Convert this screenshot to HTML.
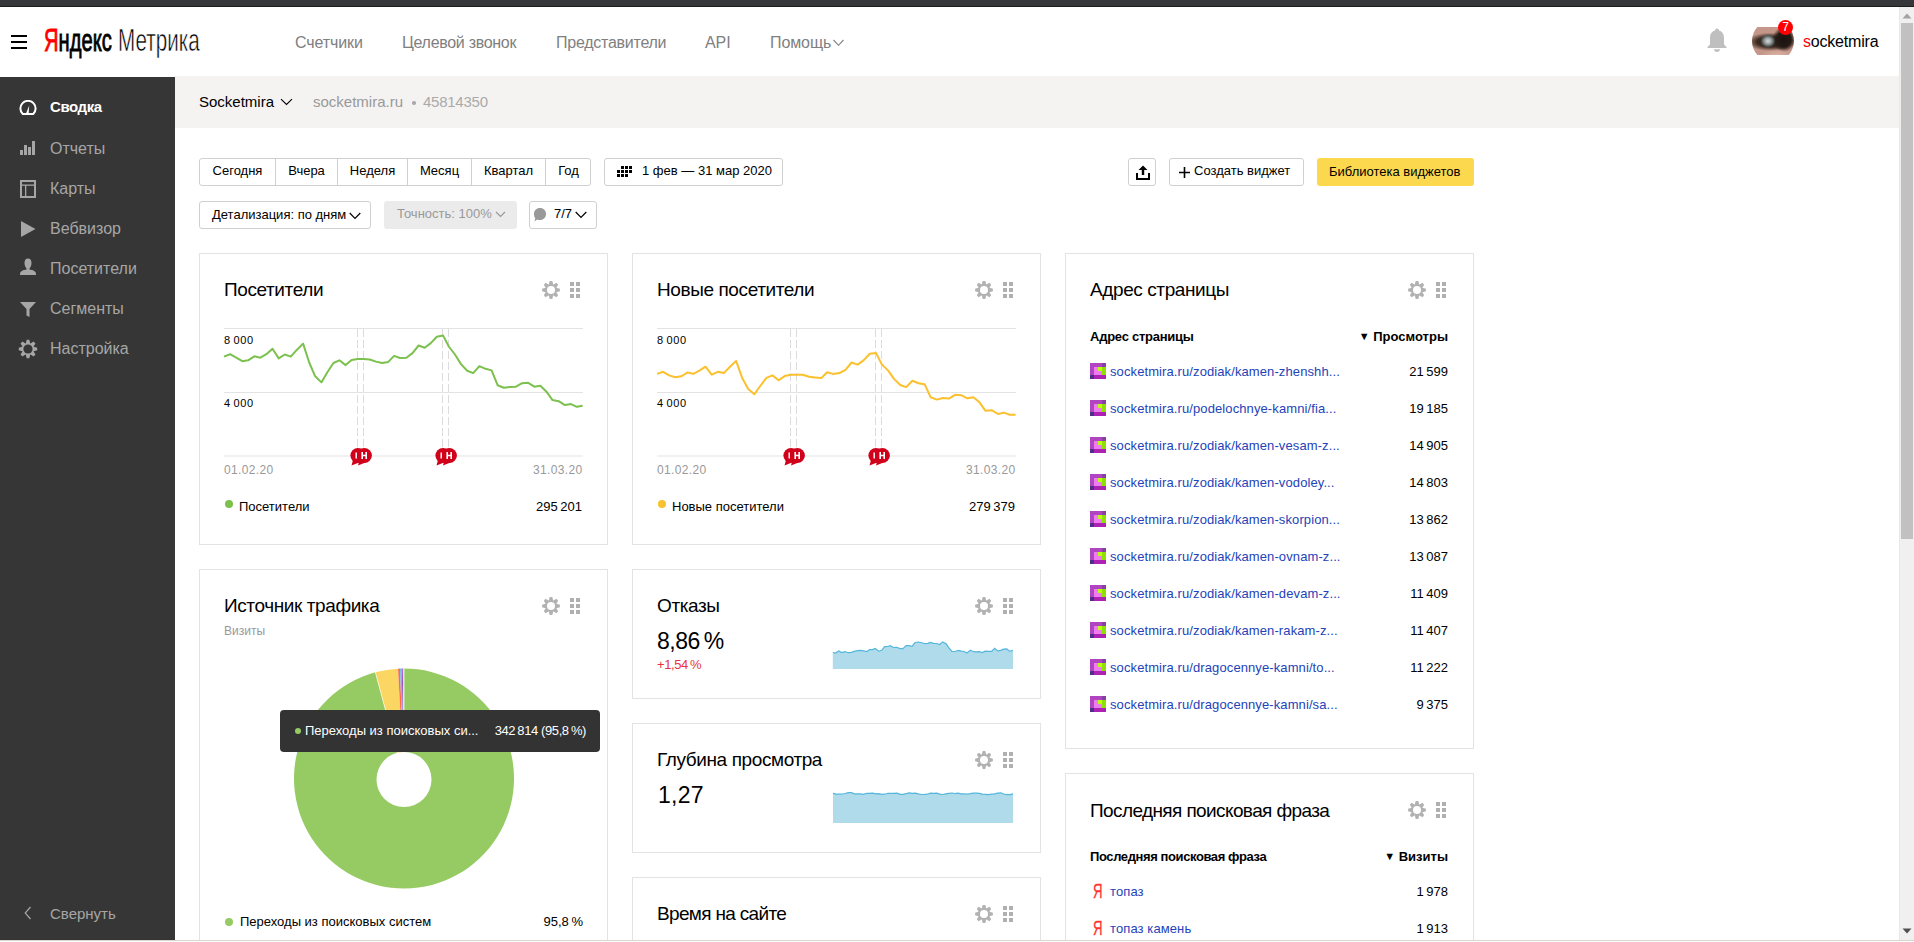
<!DOCTYPE html>
<html><head><meta charset="utf-8">
<style>
*{box-sizing:border-box;margin:0;padding:0}
html,body{width:1914px;height:942px;overflow:hidden;background:#fff;font-family:"Liberation Sans",sans-serif;color:#000}
.a{position:absolute;white-space:nowrap}
#topbar{position:absolute;left:0;top:0;width:1914px;height:6px;background:#36373b}
#topline{position:absolute;left:0;top:6px;width:1914px;height:1px;background:#1c1c1c}
#side{position:absolute;left:0;top:77px;width:175px;height:863px;background:#363636}
#sitebar{position:absolute;left:175px;top:76px;width:1724px;height:52px;background:#f4f3f1}
.nav{font-size:16px;color:#808080;top:34px;letter-spacing:-0.1px}
.mi{font-size:16px;color:#a6a6a6;left:50px}
.card{position:absolute;border:1px solid #e3e3e3;background:#fff}
.ttl{font-size:18px;color:#000}
.btn{position:absolute;border:1px solid #d0d0d0;border-radius:3px;background:#fff;font-size:13px}
.seg{position:absolute;top:0;height:100%;font-size:13px;line-height:23px;text-align:center;border-left:1px solid #d0d0d0}
#scroll{position:absolute;left:1899px;top:7px;width:15px;height:933px;background:#f0f0f0}
#bottom{position:absolute;left:0;top:940px;width:1914px;height:2px;background:#fff;border-top:1px solid #d9d6ce}
</style></head><body>
<div id="topbar"></div><div id="topline"></div>
<!-- header -->
<div class="a" style="left:11px;top:35px;width:16px;height:2px;background:#000"></div>
<div class="a" style="left:11px;top:41px;width:16px;height:2px;background:#000"></div>
<div class="a" style="left:11px;top:47px;width:16px;height:2px;background:#000"></div>
<div class="a" id="logo1" style="left:44px;top:23px;font-size:32px;line-height:34px;transform:scaleX(0.63);transform-origin:0 0;-webkit-text-stroke:0.9px #000"><span style="color:#f00;-webkit-text-stroke:0.9px #f00">Я</span>ндекс</div>
<div class="a" id="logo2" style="left:118px;top:23px;font-size:32px;line-height:34px;transform:scaleX(0.645);transform-origin:0 0;color:#000;-webkit-text-stroke:0.6px #fff">Метрика</div>
<div class="a nav" style="left:295px">Счетчики</div>
<div class="a nav" style="left:402px;letter-spacing:-0.3px">Целевой звонок</div>
<div class="a nav" style="left:556px;letter-spacing:-0.25px">Представители</div>
<div class="a nav" style="left:705px">API</div>
<div class="a nav" style="left:770px">Помощь</div>
<svg class="a" style="left:833px;top:39px" width="12" height="8" viewBox="0 0 12 8"><path d="M0.5,1 L5.5,6.3 L10.5,1" fill="none" stroke="#808080" stroke-width="1.1"/></svg>
<!-- bell -->
<svg class="a" style="left:1706px;top:27px" width="22" height="26" viewBox="0 0 22 26"><path d="M11,1.5 C12.5,1.5 13,2.5 13,3.5 C16.5,4.5 18,7.5 18,11 L18,17.5 L20.5,20 L20.5,21 L1.5,21 L1.5,20 L4,17.5 L4,11 C4,7.5 5.5,4.5 9,3.5 C9,2.5 9.5,1.5 11,1.5 Z" fill="#bfbfbf"/><path d="M8,22.2 L14,22.2 C13.8,24 12.7,25 11,25 C9.3,25 8.2,24 8,22.2Z" fill="#bfbfbf"/></svg>
<!-- avatar -->
<div class="a" style="left:1752px;top:27px;width:42px;height:28px;overflow:hidden">
<div style="position:absolute;left:0;top:-7px;width:42px;height:42px;border-radius:50%;overflow:hidden;background:#c4978a">
<div style="position:absolute;left:0;top:0;width:42px;height:42px;background:radial-gradient(ellipse 60% 22% at 45% 52%,#2e2018 0,#3a2a20 55%,rgba(60,40,30,0) 100%)"></div>
<div style="position:absolute;left:0;top:0;width:42px;height:42px;background:radial-gradient(ellipse 28% 30% at 76% 46%,#1a1210 0,#241a15 60%,rgba(36,26,21,0) 100%)"></div>
<div style="position:absolute;left:0;top:0;width:42px;height:42px;background:radial-gradient(ellipse 18% 16% at 38% 50%,#d8d8d8 0,#9aa0a0 45%,#556060 75%,rgba(80,90,90,0) 100%)"></div>
<div style="position:absolute;left:0;top:0;width:42px;height:42px;background:radial-gradient(ellipse 40% 20% at 60% 88%,#e4b8a8 0,rgba(228,184,168,0) 100%)"></div>
</div></div>
<div class="a" style="left:1778px;top:20px;width:15px;height:15px;border-radius:50%;background:#f00;color:#fff;font-size:12px;line-height:15px;text-align:center">7</div>
<div class="a" style="left:1803px;top:33px;font-size:16px;color:#000;letter-spacing:-0.2px"><span style="color:#f00">s</span>ocketmira</div>

<div id="side"></div>
<!-- sidebar icons -->
<svg class="a" style="left:18px;top:100px" width="20" height="16" viewBox="0 0 20 16"><path d="M4.8,14 A7.6,7.6 0 1 1 15.2,14 Z" fill="none" stroke="#fff" stroke-width="2"/><path d="M7.8,14 L11.2,5.5 L10.6,14Z" fill="#fff"/></svg>
<svg class="a" style="left:20px;top:140px" width="16" height="16" viewBox="0 0 16 16"><rect x="0" y="10" width="3" height="5" fill="#a6a6a6"/><rect x="4" y="5" width="3" height="10" fill="#a6a6a6"/><rect x="8" y="7" width="3" height="8" fill="#a6a6a6"/><rect x="12" y="1" width="3" height="14" fill="#a6a6a6"/></svg>
<svg class="a" style="left:20px;top:180px" width="16" height="18" viewBox="0 0 16 18"><rect x="1" y="1" width="14" height="16" fill="none" stroke="#a6a6a6" stroke-width="2"/><rect x="2" y="4.5" width="12" height="1.3" fill="#a6a6a6"/><rect x="5" y="5" width="1.3" height="12" fill="#a6a6a6"/></svg>
<svg class="a" style="left:21px;top:221px" width="15" height="16" viewBox="0 0 15 16"><path d="M0,0 L14.5,8 L0,16Z" fill="#a6a6a6"/></svg>
<svg class="a" style="left:20px;top:258px" width="16" height="18" viewBox="0 0 16 18"><path d="M8,0.5 C10.5,0.5 11.5,2.5 11.5,5 C11.5,7.5 10.5,9.5 9.5,10.5 L9.5,11.5 C12.5,12 16,13 16,16 L16,17 L0,17 L0,16 C0,13 3.5,12 6.5,11.5 L6.5,10.5 C5.5,9.5 4.5,7.5 4.5,5 C4.5,2.5 5.5,0.5 8,0.5Z" fill="#a6a6a6"/></svg>
<svg class="a" style="left:20px;top:302px" width="16" height="16" viewBox="0 0 16 16"><path d="M0,0 L16,0 L9.5,7 L9.5,15 L6.5,13.5 L6.5,7Z" fill="#a6a6a6"/></svg>
<svg class="a" style="left:18px;top:339px" width="20" height="20" viewBox="-10 -10 20 20"><g fill="#a6a6a6"><circle r="5.8"/><polygon points="-2.40,-4.80 -1.30,-9.20 1.30,-9.20 2.40,-4.80"/><polygon points="1.70,-5.09 5.59,-7.42 7.42,-5.59 5.09,-1.70"/><polygon points="4.80,-2.40 9.20,-1.30 9.20,1.30 4.80,2.40"/><polygon points="5.09,1.70 7.42,5.59 5.59,7.42 1.70,5.09"/><polygon points="2.40,4.80 1.30,9.20 -1.30,9.20 -2.40,4.80"/><polygon points="-1.70,5.09 -5.59,7.42 -7.42,5.59 -5.09,1.70"/><polygon points="-4.80,2.40 -9.20,1.30 -9.20,-1.30 -4.80,-2.40"/><polygon points="-5.09,-1.70 -7.42,-5.59 -5.59,-7.42 -1.70,-5.09"/></g><circle r="4.6" fill="#363636"/></svg>
<svg class="a" style="left:24px;top:906px" width="8" height="14" viewBox="0 0 8 14"><path d="M6.5,1 L1.2,7 L6.5,13" fill="none" stroke="#a6a6a6" stroke-width="1.2"/></svg>
<div class="a mi" style="top:98px;color:#fff;font-weight:bold;font-size:15px;letter-spacing:-0.4px">Сводка</div>
<div class="a mi" style="top:140px">Отчеты</div>
<div class="a mi" style="top:180px">Карты</div>
<div class="a mi" style="top:220px">Вебвизор</div>
<div class="a mi" style="top:260px">Посетители</div>
<div class="a mi" style="top:300px">Сегменты</div>
<div class="a mi" style="top:340px">Настройка</div>
<div class="a mi" style="top:905px;font-size:15px">Свернуть</div>

<div id="sitebar"></div>
<div class="a" style="left:199px;top:93px;font-size:15px;color:#000">Socketmira</div>
<svg class="a" style="left:279.5px;top:98px" width="13" height="8" viewBox="0 0 13 8"><path d="M1,1.2 L6.5,6.5 L12,1.2" fill="none" stroke="#000" stroke-width="1.1"/></svg>
<div class="a" style="left:313px;top:93px;font-size:15px;color:#999">socketmira.ru</div><div class="a" style="left:412px;top:101px;width:3.5px;height:3.5px;border-radius:50%;background:#aaa"></div><div class="a" style="left:423px;top:93px;font-size:15px;color:#aaa;letter-spacing:-0.25px">45814350</div>

<!-- toolbar -->
<div class="btn" style="left:199px;top:158px;width:392px;height:28px">
<div class="seg" style="left:0;width:75px;border-left:0">Сегодня</div>
<div class="seg" style="left:75px;width:62px">Вчера</div>
<div class="seg" style="left:137px;width:70px">Неделя</div>
<div class="seg" style="left:207px;width:64px">Месяц</div>
<div class="seg" style="left:271px;width:74px">Квартал</div>
<div class="seg" style="left:345px;width:46px">Год</div>
</div>
<div class="btn" style="left:604px;top:158px;width:179px;height:28px">
<svg class="a" style="left:12px;top:7px" width="16" height="12" viewBox="0 0 16 12"><g fill="#000"><rect x="4" y="0" width="3" height="3"/><rect x="8" y="0" width="3" height="3"/><rect x="12" y="0" width="3" height="3"/><rect x="0" y="4" width="3" height="3"/><rect x="4" y="4" width="3" height="3"/><rect x="8" y="4" width="3" height="3"/><rect x="12" y="4" width="3" height="3"/><rect x="0" y="8" width="3" height="3"/><rect x="4" y="8" width="3" height="3"/><rect x="8" y="8" width="3" height="3"/></g></svg>
<div class="a" style="left:37px;top:4px;font-size:13px">1 фев — 31 мар 2020</div>
</div>
<div class="btn" style="left:199px;top:201px;width:172px;height:28px">
<div class="a" style="left:12px;top:4.5px;font-size:13px">Детализация: по дням</div>
<svg class="a" style="left:149px;top:10px" width="12" height="8" viewBox="0 0 12 8"><path d="M0.7,1 L6,6.3 L11.3,1" fill="none" stroke="#000" stroke-width="1.2"/></svg>
</div>
<div class="a" style="left:384px;top:201px;width:133px;height:28px;background:#ebebeb;border-radius:3px">
<div class="a" style="left:13px;top:5px;font-size:13px;color:#999">Точность: 100%</div>
<svg class="a" style="left:111px;top:10px" width="11" height="7" viewBox="0 0 11 7"><path d="M1,1 L5.5,5.5 L10,1" fill="none" stroke="#999" stroke-width="1.2"/></svg>
</div>
<div class="btn" style="left:529px;top:201px;width:68px;height:28px">
<svg class="a" style="left:3px;top:5px" width="14" height="16" viewBox="0 0 14 16"><path d="M7,1 C10.5,1 13,3.5 13,7 C13,10.5 10.5,13 7,13 C6,13 5,12.8 4.2,12.4 L1.5,14.5 L2.3,11.3 C1.5,10.2 1,8.7 1,7 C1,3.5 3.5,1 7,1Z" fill="#999"/></svg>
<div class="a" style="left:24px;top:4px;font-size:13px">7/7</div>
<svg class="a" style="left:45px;top:9px" width="12" height="8" viewBox="0 0 12 8"><path d="M0.7,1 L6,6.3 L11.3,1" fill="none" stroke="#000" stroke-width="1.2"/></svg>
</div>
<div class="btn" style="left:1128px;top:158px;width:28px;height:28px">
<svg class="a" style="left:7px;top:6px" width="14" height="16" viewBox="0 0 14 16"><path d="M7,0.5 L2.5,5 L5.8,5 L5.8,10 L8.2,10 L8.2,5 L11.5,5Z" fill="#000"/><path d="M1,8 L1,14 L13,14 L13,8" fill="none" stroke="#000" stroke-width="2"/></svg>
</div>
<div class="btn" style="left:1169px;top:158px;width:135px;height:28px">
<svg class="a" style="left:8px;top:7px" width="13" height="13" viewBox="0 0 13 13"><path d="M6.5,1 L6.5,12 M1,6.5 L12,6.5" stroke="#000" stroke-width="1.6"/></svg>
<div class="a" style="left:24px;top:4px;font-size:13px">Создать виджет</div>
</div>
<div class="a" style="left:1317px;top:158px;width:157px;height:28px;background:#fcd84f;border-radius:3px">
<div class="a" style="left:12px;top:5.5px;font-size:13px">Библиотека виджетов</div>
</div>

<!-- cards -->
<div class="card" style="left:199px;top:253px;width:409px;height:292px"></div>
<div class="card" style="left:632px;top:253px;width:409px;height:292px"></div>
<div class="card" style="left:1065px;top:253px;width:409px;height:496px"></div>
<div class="card" style="left:199px;top:569px;width:409px;height:400px"></div>
<div class="card" style="left:632px;top:569px;width:409px;height:130px"></div>
<div class="card" style="left:632px;top:723px;width:409px;height:130px"></div>
<div class="card" style="left:632px;top:877px;width:409px;height:130px"></div>
<div class="card" style="left:1065px;top:773px;width:409px;height:300px"></div>
<svg class="a" style="left:541px;top:280px" width="20" height="20" viewBox="-10 -10 20 20"><g fill="#b2b2b2"><circle r="5.7"/><polygon points="-2.40,-4.70 -1.30,-8.90 1.30,-8.90 2.40,-4.70"/><polygon points="1.63,-5.02 5.37,-7.21 7.21,-5.37 5.02,-1.63"/><polygon points="4.70,-2.40 8.90,-1.30 8.90,1.30 4.70,2.40"/><polygon points="5.02,1.63 7.21,5.37 5.37,7.21 1.63,5.02"/><polygon points="2.40,4.70 1.30,8.90 -1.30,8.90 -2.40,4.70"/><polygon points="-1.63,5.02 -5.37,7.21 -7.21,5.37 -5.02,1.63"/><polygon points="-4.70,2.40 -8.90,1.30 -8.90,-1.30 -4.70,-2.40"/><polygon points="-5.02,-1.63 -7.21,-5.37 -5.37,-7.21 -1.63,-5.02"/></g><circle r="4.0" fill="#fff"/></svg><svg class="a" style="left:570px;top:282px" width="10" height="16" viewBox="0 0 10 16"><g fill="#b0b0b0"><rect x="0" y="0" width="4" height="4"/><rect x="6" y="0" width="4" height="4"/><rect x="0" y="6" width="4" height="4"/><rect x="6" y="6" width="4" height="4"/><rect x="0" y="12" width="4" height="4"/><rect x="6" y="12" width="4" height="4"/></g></svg>
<div class="a" style="left:224px;top:279px;font-size:19px;color:#000;letter-spacing:-0.4px">Посетители</div>
<svg class="a" style="left:0;top:0" width="1914" height="942"><line x1="224" y1="328.5" x2="583" y2="328.5" stroke="#e3e3e3" stroke-width="1"/><line x1="224" y1="392.5" x2="583" y2="392.5" stroke="#e3e3e3" stroke-width="1"/><line x1="224" y1="456" x2="583" y2="456" stroke="#e3e3e3" stroke-width="1"/><line x1="357.5" y1="329" x2="357.5" y2="455" stroke="#dcdcdc" stroke-width="1" stroke-dasharray="8,3"/><line x1="363.5" y1="329" x2="363.5" y2="455" stroke="#dcdcdc" stroke-width="1" stroke-dasharray="8,3"/><line x1="442.5" y1="329" x2="442.5" y2="455" stroke="#dcdcdc" stroke-width="1" stroke-dasharray="8,3"/><line x1="448.5" y1="329" x2="448.5" y2="455" stroke="#dcdcdc" stroke-width="1" stroke-dasharray="8,3"/><path d="M224.0,356.6 L230.1,354.2 L236.2,357.7 L242.3,361.2 L248.1,360.3 L254.3,356.3 L260.3,357.7 L266.4,354.2 L272.5,348.7 L278.7,358.4 L284.8,354.5 L290.8,356.6 L297.0,349.7 L303.1,343.6 L309.2,362.5 L315.2,376.3 L321.4,382.4 L327.2,372.5 L333.4,363.0 L339.4,360.3 L345.6,365.1 L351.6,360.1 L357.8,358.9 L363.8,358.9 L369.7,359.5 L376.0,361.6 L382.1,363.0 L388.3,361.9 L394.1,355.9 L400.0,358.0 L406.4,357.8 L412.5,353.1 L418.6,345.5 L424.7,347.8 L430.8,343.1 L436.8,336.8 L443.0,335.4 L448.8,346.5 L455.0,354.5 L461.0,364.1 L467.2,370.7 L473.2,373.1 L479.4,366.2 L485.5,368.8 L491.6,370.4 L497.7,385.3 L503.8,387.7 L509.9,386.9 L516.0,386.7 L522.1,383.2 L528.2,382.8 L534.3,386.7 L540.4,385.8 L546.5,391.7 L552.5,400.1 L558.7,401.2 L564.9,405.1 L570.9,404.1 L576.8,406.8 L582.6,405.8" fill="none" stroke="#7cc14e" stroke-width="2" stroke-linejoin="round" stroke-linecap="butt"/></svg>
<div class="a" style="left:224px;top:334px;font-size:11px;color:#000;letter-spacing:0.6px">8&#8201;000</div>
<div class="a" style="left:224px;top:397px;font-size:11px;color:#000;letter-spacing:0.6px">4&#8201;000</div>
<div class="a" style="left:224px;top:463px;font-size:12px;color:#999;letter-spacing:0.35px">01.02.20</div>
<div class="a" style="right:1331.5px;top:463px;font-size:12px;color:#999;letter-spacing:0.35px">31.03.20</div>
<svg class="a" style="left:348.5px;top:446px" width="26" height="22" viewBox="0 0 26 22"><g fill="#d0021b"><circle cx="9" cy="9.5" r="7.6"/><path d="M4,14 L2.5,19.5 L10,16.5Z"/><circle cx="15.3" cy="9.5" r="7.6"/><path d="M10.5,14 L9,19.5 L16.5,16.5Z"/></g><rect x="6.5" y="6.5" width="1.4" height="6" fill="#fff"/><path d="M13.2,6 L13.2,13 M17.2,6 L17.2,13 M13.2,9.5 L17.2,9.5" stroke="#fff" stroke-width="1.6"/></svg>
<svg class="a" style="left:433.5px;top:446px" width="26" height="22" viewBox="0 0 26 22"><g fill="#d0021b"><circle cx="9" cy="9.5" r="7.6"/><path d="M4,14 L2.5,19.5 L10,16.5Z"/><circle cx="15.3" cy="9.5" r="7.6"/><path d="M10.5,14 L9,19.5 L16.5,16.5Z"/></g><rect x="6.5" y="6.5" width="1.4" height="6" fill="#fff"/><path d="M13.2,6 L13.2,13 M17.2,6 L17.2,13 M13.2,9.5 L17.2,9.5" stroke="#fff" stroke-width="1.6"/></svg>
<div class="a" style="left:225px;top:500px;width:8px;height:8px;border-radius:50%;background:#7cc14e"></div>
<div class="a" style="left:239px;top:499px;font-size:13px;color:#000;">Посетители</div>
<div class="a" style="right:1332px;top:499px;font-size:13px;color:#000;">295&#8201;201</div>
<svg class="a" style="left:974px;top:280px" width="20" height="20" viewBox="-10 -10 20 20"><g fill="#b2b2b2"><circle r="5.7"/><polygon points="-2.40,-4.70 -1.30,-8.90 1.30,-8.90 2.40,-4.70"/><polygon points="1.63,-5.02 5.37,-7.21 7.21,-5.37 5.02,-1.63"/><polygon points="4.70,-2.40 8.90,-1.30 8.90,1.30 4.70,2.40"/><polygon points="5.02,1.63 7.21,5.37 5.37,7.21 1.63,5.02"/><polygon points="2.40,4.70 1.30,8.90 -1.30,8.90 -2.40,4.70"/><polygon points="-1.63,5.02 -5.37,7.21 -7.21,5.37 -5.02,1.63"/><polygon points="-4.70,2.40 -8.90,1.30 -8.90,-1.30 -4.70,-2.40"/><polygon points="-5.02,-1.63 -7.21,-5.37 -5.37,-7.21 -1.63,-5.02"/></g><circle r="4.0" fill="#fff"/></svg><svg class="a" style="left:1003px;top:282px" width="10" height="16" viewBox="0 0 10 16"><g fill="#b0b0b0"><rect x="0" y="0" width="4" height="4"/><rect x="6" y="0" width="4" height="4"/><rect x="0" y="6" width="4" height="4"/><rect x="6" y="6" width="4" height="4"/><rect x="0" y="12" width="4" height="4"/><rect x="6" y="12" width="4" height="4"/></g></svg>
<div class="a" style="left:657px;top:279px;font-size:19px;color:#000;letter-spacing:-0.4px">Новые посетители</div>
<svg class="a" style="left:0;top:0" width="1914" height="942"><line x1="657" y1="328.5" x2="1016" y2="328.5" stroke="#e3e3e3" stroke-width="1"/><line x1="657" y1="392.5" x2="1016" y2="392.5" stroke="#e3e3e3" stroke-width="1"/><line x1="657" y1="456" x2="1016" y2="456" stroke="#e3e3e3" stroke-width="1"/><line x1="790.5" y1="329" x2="790.5" y2="455" stroke="#dcdcdc" stroke-width="1" stroke-dasharray="8,3"/><line x1="796.5" y1="329" x2="796.5" y2="455" stroke="#dcdcdc" stroke-width="1" stroke-dasharray="8,3"/><line x1="875.5" y1="329" x2="875.5" y2="455" stroke="#dcdcdc" stroke-width="1" stroke-dasharray="8,3"/><line x1="881.5" y1="329" x2="881.5" y2="455" stroke="#dcdcdc" stroke-width="1" stroke-dasharray="8,3"/><path d="M657.0,373.9 L663.1,371.8 L669.1,375.4 L675.3,377.3 L681.3,376.3 L687.3,372.5 L693.3,373.8 L699.4,370.7 L705.5,366.7 L711.7,374.7 L717.8,371.8 L723.8,373.1 L730.0,366.7 L736.1,360.9 L742.2,377.9 L748.2,389.0 L754.4,394.3 L760.2,386.0 L766.4,377.9 L772.4,375.4 L778.6,380.3 L784.6,376.1 L790.8,374.7 L796.8,374.7 L802.7,374.8 L809.1,376.8 L815.1,377.5 L821.3,378.1 L827.1,372.3 L833.0,373.9 L839.4,373.1 L845.5,369.9 L851.6,362.5 L857.7,364.6 L863.8,360.1 L869.8,353.8 L876.0,352.9 L881.8,364.4 L888.0,370.4 L894.0,378.9 L900.2,385.0 L906.2,387.1 L912.4,380.7 L918.5,383.2 L924.6,384.2 L930.7,397.3 L936.8,399.6 L942.9,398.0 L949.0,398.6 L955.1,394.8 L961.2,395.2 L967.3,398.3 L973.4,397.3 L979.5,402.3 L985.5,410.8 L991.7,410.2 L997.9,414.0 L1003.9,412.6 L1009.8,414.7 L1015.6,414.7" fill="none" stroke="#fbc02d" stroke-width="2" stroke-linejoin="round" stroke-linecap="butt"/></svg>
<div class="a" style="left:657px;top:334px;font-size:11px;color:#000;letter-spacing:0.6px">8&#8201;000</div>
<div class="a" style="left:657px;top:397px;font-size:11px;color:#000;letter-spacing:0.6px">4&#8201;000</div>
<div class="a" style="left:657px;top:463px;font-size:12px;color:#999;letter-spacing:0.35px">01.02.20</div>
<div class="a" style="right:898.5px;top:463px;font-size:12px;color:#999;letter-spacing:0.35px">31.03.20</div>
<svg class="a" style="left:781.5px;top:446px" width="26" height="22" viewBox="0 0 26 22"><g fill="#d0021b"><circle cx="9" cy="9.5" r="7.6"/><path d="M4,14 L2.5,19.5 L10,16.5Z"/><circle cx="15.3" cy="9.5" r="7.6"/><path d="M10.5,14 L9,19.5 L16.5,16.5Z"/></g><rect x="6.5" y="6.5" width="1.4" height="6" fill="#fff"/><path d="M13.2,6 L13.2,13 M17.2,6 L17.2,13 M13.2,9.5 L17.2,9.5" stroke="#fff" stroke-width="1.6"/></svg>
<svg class="a" style="left:866.5px;top:446px" width="26" height="22" viewBox="0 0 26 22"><g fill="#d0021b"><circle cx="9" cy="9.5" r="7.6"/><path d="M4,14 L2.5,19.5 L10,16.5Z"/><circle cx="15.3" cy="9.5" r="7.6"/><path d="M10.5,14 L9,19.5 L16.5,16.5Z"/></g><rect x="6.5" y="6.5" width="1.4" height="6" fill="#fff"/><path d="M13.2,6 L13.2,13 M17.2,6 L17.2,13 M13.2,9.5 L17.2,9.5" stroke="#fff" stroke-width="1.6"/></svg>
<div class="a" style="left:658px;top:500px;width:8px;height:8px;border-radius:50%;background:#fbc02d"></div>
<div class="a" style="left:672px;top:499px;font-size:13px;color:#000;">Новые посетители</div>
<div class="a" style="right:899px;top:499px;font-size:13px;color:#000;">279&#8201;379</div>
<svg class="a" style="left:1407px;top:280px" width="20" height="20" viewBox="-10 -10 20 20"><g fill="#b2b2b2"><circle r="5.7"/><polygon points="-2.40,-4.70 -1.30,-8.90 1.30,-8.90 2.40,-4.70"/><polygon points="1.63,-5.02 5.37,-7.21 7.21,-5.37 5.02,-1.63"/><polygon points="4.70,-2.40 8.90,-1.30 8.90,1.30 4.70,2.40"/><polygon points="5.02,1.63 7.21,5.37 5.37,7.21 1.63,5.02"/><polygon points="2.40,4.70 1.30,8.90 -1.30,8.90 -2.40,4.70"/><polygon points="-1.63,5.02 -5.37,7.21 -7.21,5.37 -5.02,1.63"/><polygon points="-4.70,2.40 -8.90,1.30 -8.90,-1.30 -4.70,-2.40"/><polygon points="-5.02,-1.63 -7.21,-5.37 -5.37,-7.21 -1.63,-5.02"/></g><circle r="4.0" fill="#fff"/></svg><svg class="a" style="left:1436px;top:282px" width="10" height="16" viewBox="0 0 10 16"><g fill="#b0b0b0"><rect x="0" y="0" width="4" height="4"/><rect x="6" y="0" width="4" height="4"/><rect x="0" y="6" width="4" height="4"/><rect x="6" y="6" width="4" height="4"/><rect x="0" y="12" width="4" height="4"/><rect x="6" y="12" width="4" height="4"/></g></svg>
<div class="a" style="left:1090px;top:279px;font-size:19px;color:#000;letter-spacing:-0.4px">Адрес страницы</div>
<div class="a" style="left:1090px;top:329px;font-size:13px;color:#000;font-weight:bold;letter-spacing:-0.25px">Адрес страницы</div>
<div class="a" style="right:466px;top:329px;font-size:13px;color:#000;font-weight:bold"><span style="font-size:11px;position:relative;top:-1px">▼</span> Просмотры</div>
<svg class="a" style="left:1090px;top:363px" width="16" height="16" viewBox="0 0 16 16" shape-rendering="crispEdges"><rect x="0" y="0" width="16" height="16" fill="#b145c1"/><rect x="12" y="0" width="4" height="4" fill="#8a3fa4"/><rect x="4" y="4" width="8" height="8" fill="#ee7cf0"/><rect x="8" y="4" width="4" height="4" fill="#b8ff10"/><rect x="12" y="4" width="4" height="8" fill="#8ee000"/><rect x="0" y="12" width="16" height="4" fill="#ad22b2"/><rect x="0" y="12" width="4" height="4" fill="#4f2f8c"/></svg>
<div class="a" style="left:1110px;top:364px;font-size:13px;color:#2443b8;letter-spacing:0.1px">socketmira.ru/zodiak/kamen-zhenshh...</div>
<div class="a" style="right:466px;top:364px;font-size:13px;color:#000;">21&#8201;599</div>
<svg class="a" style="left:1090px;top:400px" width="16" height="16" viewBox="0 0 16 16" shape-rendering="crispEdges"><rect x="0" y="0" width="16" height="16" fill="#b145c1"/><rect x="12" y="0" width="4" height="4" fill="#8a3fa4"/><rect x="4" y="4" width="8" height="8" fill="#ee7cf0"/><rect x="8" y="4" width="4" height="4" fill="#b8ff10"/><rect x="12" y="4" width="4" height="8" fill="#8ee000"/><rect x="0" y="12" width="16" height="4" fill="#ad22b2"/><rect x="0" y="12" width="4" height="4" fill="#4f2f8c"/></svg>
<div class="a" style="left:1110px;top:401px;font-size:13px;color:#2443b8;letter-spacing:0.1px">socketmira.ru/podelochnye-kamni/fia...</div>
<div class="a" style="right:466px;top:401px;font-size:13px;color:#000;">19&#8201;185</div>
<svg class="a" style="left:1090px;top:437px" width="16" height="16" viewBox="0 0 16 16" shape-rendering="crispEdges"><rect x="0" y="0" width="16" height="16" fill="#b145c1"/><rect x="12" y="0" width="4" height="4" fill="#8a3fa4"/><rect x="4" y="4" width="8" height="8" fill="#ee7cf0"/><rect x="8" y="4" width="4" height="4" fill="#b8ff10"/><rect x="12" y="4" width="4" height="8" fill="#8ee000"/><rect x="0" y="12" width="16" height="4" fill="#ad22b2"/><rect x="0" y="12" width="4" height="4" fill="#4f2f8c"/></svg>
<div class="a" style="left:1110px;top:438px;font-size:13px;color:#2443b8;letter-spacing:0.1px">socketmira.ru/zodiak/kamen-vesam-z...</div>
<div class="a" style="right:466px;top:438px;font-size:13px;color:#000;">14&#8201;905</div>
<svg class="a" style="left:1090px;top:474px" width="16" height="16" viewBox="0 0 16 16" shape-rendering="crispEdges"><rect x="0" y="0" width="16" height="16" fill="#b145c1"/><rect x="12" y="0" width="4" height="4" fill="#8a3fa4"/><rect x="4" y="4" width="8" height="8" fill="#ee7cf0"/><rect x="8" y="4" width="4" height="4" fill="#b8ff10"/><rect x="12" y="4" width="4" height="8" fill="#8ee000"/><rect x="0" y="12" width="16" height="4" fill="#ad22b2"/><rect x="0" y="12" width="4" height="4" fill="#4f2f8c"/></svg>
<div class="a" style="left:1110px;top:475px;font-size:13px;color:#2443b8;letter-spacing:0.1px">socketmira.ru/zodiak/kamen-vodoley...</div>
<div class="a" style="right:466px;top:475px;font-size:13px;color:#000;">14&#8201;803</div>
<svg class="a" style="left:1090px;top:511px" width="16" height="16" viewBox="0 0 16 16" shape-rendering="crispEdges"><rect x="0" y="0" width="16" height="16" fill="#b145c1"/><rect x="12" y="0" width="4" height="4" fill="#8a3fa4"/><rect x="4" y="4" width="8" height="8" fill="#ee7cf0"/><rect x="8" y="4" width="4" height="4" fill="#b8ff10"/><rect x="12" y="4" width="4" height="8" fill="#8ee000"/><rect x="0" y="12" width="16" height="4" fill="#ad22b2"/><rect x="0" y="12" width="4" height="4" fill="#4f2f8c"/></svg>
<div class="a" style="left:1110px;top:512px;font-size:13px;color:#2443b8;letter-spacing:0.1px">socketmira.ru/zodiak/kamen-skorpion...</div>
<div class="a" style="right:466px;top:512px;font-size:13px;color:#000;">13&#8201;862</div>
<svg class="a" style="left:1090px;top:548px" width="16" height="16" viewBox="0 0 16 16" shape-rendering="crispEdges"><rect x="0" y="0" width="16" height="16" fill="#b145c1"/><rect x="12" y="0" width="4" height="4" fill="#8a3fa4"/><rect x="4" y="4" width="8" height="8" fill="#ee7cf0"/><rect x="8" y="4" width="4" height="4" fill="#b8ff10"/><rect x="12" y="4" width="4" height="8" fill="#8ee000"/><rect x="0" y="12" width="16" height="4" fill="#ad22b2"/><rect x="0" y="12" width="4" height="4" fill="#4f2f8c"/></svg>
<div class="a" style="left:1110px;top:549px;font-size:13px;color:#2443b8;letter-spacing:0.1px">socketmira.ru/zodiak/kamen-ovnam-z...</div>
<div class="a" style="right:466px;top:549px;font-size:13px;color:#000;">13&#8201;087</div>
<svg class="a" style="left:1090px;top:585px" width="16" height="16" viewBox="0 0 16 16" shape-rendering="crispEdges"><rect x="0" y="0" width="16" height="16" fill="#b145c1"/><rect x="12" y="0" width="4" height="4" fill="#8a3fa4"/><rect x="4" y="4" width="8" height="8" fill="#ee7cf0"/><rect x="8" y="4" width="4" height="4" fill="#b8ff10"/><rect x="12" y="4" width="4" height="8" fill="#8ee000"/><rect x="0" y="12" width="16" height="4" fill="#ad22b2"/><rect x="0" y="12" width="4" height="4" fill="#4f2f8c"/></svg>
<div class="a" style="left:1110px;top:586px;font-size:13px;color:#2443b8;letter-spacing:0.1px">socketmira.ru/zodiak/kamen-devam-z...</div>
<div class="a" style="right:466px;top:586px;font-size:13px;color:#000;">11&#8201;409</div>
<svg class="a" style="left:1090px;top:622px" width="16" height="16" viewBox="0 0 16 16" shape-rendering="crispEdges"><rect x="0" y="0" width="16" height="16" fill="#b145c1"/><rect x="12" y="0" width="4" height="4" fill="#8a3fa4"/><rect x="4" y="4" width="8" height="8" fill="#ee7cf0"/><rect x="8" y="4" width="4" height="4" fill="#b8ff10"/><rect x="12" y="4" width="4" height="8" fill="#8ee000"/><rect x="0" y="12" width="16" height="4" fill="#ad22b2"/><rect x="0" y="12" width="4" height="4" fill="#4f2f8c"/></svg>
<div class="a" style="left:1110px;top:623px;font-size:13px;color:#2443b8;letter-spacing:0.1px">socketmira.ru/zodiak/kamen-rakam-z...</div>
<div class="a" style="right:466px;top:623px;font-size:13px;color:#000;">11&#8201;407</div>
<svg class="a" style="left:1090px;top:659px" width="16" height="16" viewBox="0 0 16 16" shape-rendering="crispEdges"><rect x="0" y="0" width="16" height="16" fill="#b145c1"/><rect x="12" y="0" width="4" height="4" fill="#8a3fa4"/><rect x="4" y="4" width="8" height="8" fill="#ee7cf0"/><rect x="8" y="4" width="4" height="4" fill="#b8ff10"/><rect x="12" y="4" width="4" height="8" fill="#8ee000"/><rect x="0" y="12" width="16" height="4" fill="#ad22b2"/><rect x="0" y="12" width="4" height="4" fill="#4f2f8c"/></svg>
<div class="a" style="left:1110px;top:660px;font-size:13px;color:#2443b8;letter-spacing:0.1px">socketmira.ru/dragocennye-kamni/to...</div>
<div class="a" style="right:466px;top:660px;font-size:13px;color:#000;">11&#8201;222</div>
<svg class="a" style="left:1090px;top:696px" width="16" height="16" viewBox="0 0 16 16" shape-rendering="crispEdges"><rect x="0" y="0" width="16" height="16" fill="#b145c1"/><rect x="12" y="0" width="4" height="4" fill="#8a3fa4"/><rect x="4" y="4" width="8" height="8" fill="#ee7cf0"/><rect x="8" y="4" width="4" height="4" fill="#b8ff10"/><rect x="12" y="4" width="4" height="8" fill="#8ee000"/><rect x="0" y="12" width="16" height="4" fill="#ad22b2"/><rect x="0" y="12" width="4" height="4" fill="#4f2f8c"/></svg>
<div class="a" style="left:1110px;top:697px;font-size:13px;color:#2443b8;letter-spacing:0.1px">socketmira.ru/dragocennye-kamni/sa...</div>
<div class="a" style="right:466px;top:697px;font-size:13px;color:#000;">9&#8201;375</div>
<svg class="a" style="left:541px;top:596px" width="20" height="20" viewBox="-10 -10 20 20"><g fill="#b2b2b2"><circle r="5.7"/><polygon points="-2.40,-4.70 -1.30,-8.90 1.30,-8.90 2.40,-4.70"/><polygon points="1.63,-5.02 5.37,-7.21 7.21,-5.37 5.02,-1.63"/><polygon points="4.70,-2.40 8.90,-1.30 8.90,1.30 4.70,2.40"/><polygon points="5.02,1.63 7.21,5.37 5.37,7.21 1.63,5.02"/><polygon points="2.40,4.70 1.30,8.90 -1.30,8.90 -2.40,4.70"/><polygon points="-1.63,5.02 -5.37,7.21 -7.21,5.37 -5.02,1.63"/><polygon points="-4.70,2.40 -8.90,1.30 -8.90,-1.30 -4.70,-2.40"/><polygon points="-5.02,-1.63 -7.21,-5.37 -5.37,-7.21 -1.63,-5.02"/></g><circle r="4.0" fill="#fff"/></svg><svg class="a" style="left:570px;top:598px" width="10" height="16" viewBox="0 0 10 16"><g fill="#b0b0b0"><rect x="0" y="0" width="4" height="4"/><rect x="6" y="0" width="4" height="4"/><rect x="0" y="6" width="4" height="4"/><rect x="6" y="6" width="4" height="4"/><rect x="0" y="12" width="4" height="4"/><rect x="6" y="12" width="4" height="4"/></g></svg>
<div class="a" style="left:224px;top:595px;font-size:19px;color:#000;letter-spacing:-0.4px">Источник трафика</div>
<div class="a" style="left:224px;top:624px;font-size:12px;color:#999;">Визиты</div>
<svg class="a" style="left:0;top:0" width="1914" height="942"><path d="M404,778.5 L404.00,668.50 A110,110 0 1 1 375.34,672.30 Z" fill="#96cb64"/><path d="M404,778.5 L375.34,672.30 A110,110 0 0 1 398.05,668.66 Z" fill="#fcd663"/><path d="M404,778.5 L398.05,668.66 A110,110 0 0 1 399.97,668.57 Z" fill="#ff6a4b"/><path d="M404,778.5 L399.97,668.57 A110,110 0 0 1 401.70,668.52 Z" fill="#79b9ea"/><path d="M404,778.5 L401.70,668.52 A110,110 0 0 1 402.85,668.51 Z" fill="#9b50c2"/><path d="M404,778.5 L402.85,668.51 A110,110 0 0 1 404.00,668.50 Z" fill="#d9c4f0"/><line x1="404" y1="778.5" x2="404" y2="667.5" stroke="#fff" stroke-width="0.7"/><line x1="404" y1="778.5" x2="375.08" y2="671.33" stroke="#fff" stroke-width="0.6"/><circle cx="404" cy="779.5" r="27.5" fill="#fff"/><path d="M832.8,652.5 L835.4,653.0 L838.8,650.9 L841.7,652.5 L844.9,651.7 L848.2,652.7 L851.4,652.4 L854.3,651.4 L857.4,650.6 L860.5,650.3 L863.7,650.9 L866.8,651.5 L869.7,649.6 L872.5,649.6 L875.2,648.5 L878.8,651.2 L881.7,650.3 L884.6,646.6 L887.4,646.5 L890.3,645.7 L893.4,647.5 L896.6,647.3 L899.5,648.3 L902.8,648.8 L906.0,645.6 L908.9,645.6 L912.0,646.3 L915.1,642.5 L918.3,642.0 L921.1,642.5 L924.7,643.7 L927.8,643.3 L930.4,642.4 L933.6,643.3 L936.7,643.5 L939.6,644.5 L942.7,641.9 L946.1,643.8 L949.0,647.8 L951.9,651.4 L955.0,651.5 L958.4,650.4 L961.3,651.2 L964.1,651.5 L967.0,653.0 L970.4,650.1 L973.6,651.7 L976.4,651.8 L979.3,651.7 L982.4,652.6 L985.3,651.2 L988.4,651.4 L991.6,651.4 L994.7,648.4 L997.8,650.9 L1000.7,650.4 L1003.6,649.2 L1006.7,648.9 L1010.1,651.4 L1013.0,650.3 L1013,669 L832.8,669 Z" fill="#afdbea"/><path d="M832.8,652.5 L835.4,653.0 L838.8,650.9 L841.7,652.5 L844.9,651.7 L848.2,652.7 L851.4,652.4 L854.3,651.4 L857.4,650.6 L860.5,650.3 L863.7,650.9 L866.8,651.5 L869.7,649.6 L872.5,649.6 L875.2,648.5 L878.8,651.2 L881.7,650.3 L884.6,646.6 L887.4,646.5 L890.3,645.7 L893.4,647.5 L896.6,647.3 L899.5,648.3 L902.8,648.8 L906.0,645.6 L908.9,645.6 L912.0,646.3 L915.1,642.5 L918.3,642.0 L921.1,642.5 L924.7,643.7 L927.8,643.3 L930.4,642.4 L933.6,643.3 L936.7,643.5 L939.6,644.5 L942.7,641.9 L946.1,643.8 L949.0,647.8 L951.9,651.4 L955.0,651.5 L958.4,650.4 L961.3,651.2 L964.1,651.5 L967.0,653.0 L970.4,650.1 L973.6,651.7 L976.4,651.8 L979.3,651.7 L982.4,652.6 L985.3,651.2 L988.4,651.4 L991.6,651.4 L994.7,648.4 L997.8,650.9 L1000.7,650.4 L1003.6,649.2 L1006.7,648.9 L1010.1,651.4 L1013.0,650.3" fill="none" stroke="#55b6dc" stroke-width="1.2"/><path d="M833.0,793.3 L836.1,794.1 L839.1,794.1 L842.2,794.0 L845.2,793.5 L848.3,792.6 L851.3,792.6 L854.4,793.9 L857.4,793.8 L860.5,793.9 L863.5,794.3 L866.6,793.3 L869.6,793.3 L872.7,793.1 L875.7,793.8 L878.8,793.7 L881.8,794.3 L884.9,794.2 L887.9,793.3 L891.0,793.3 L894.0,793.3 L897.1,793.2 L900.1,794.3 L903.2,794.3 L906.2,793.6 L909.3,792.8 L912.3,793.4 L915.4,793.1 L918.4,793.9 L921.5,794.5 L924.5,794.4 L927.6,794.2 L930.6,793.2 L933.7,793.3 L936.7,793.1 L939.8,794.1 L942.8,794.5 L945.9,793.8 L948.9,793.4 L952.0,793.0 L955.0,793.5 L958.1,793.1 L961.1,793.8 L964.2,793.9 L967.2,794.2 L970.3,793.7 L973.3,793.1 L976.4,793.1 L979.4,793.3 L982.5,794.1 L985.5,794.3 L988.6,794.6 L991.6,794.1 L994.7,793.8 L997.7,793.2 L1000.8,792.8 L1003.8,794.0 L1006.9,794.6 L1009.9,794.6 L1013.0,793.9 L1013,823 L833,823 Z" fill="#afdbea"/><path d="M833.0,793.3 L836.1,794.1 L839.1,794.1 L842.2,794.0 L845.2,793.5 L848.3,792.6 L851.3,792.6 L854.4,793.9 L857.4,793.8 L860.5,793.9 L863.5,794.3 L866.6,793.3 L869.6,793.3 L872.7,793.1 L875.7,793.8 L878.8,793.7 L881.8,794.3 L884.9,794.2 L887.9,793.3 L891.0,793.3 L894.0,793.3 L897.1,793.2 L900.1,794.3 L903.2,794.3 L906.2,793.6 L909.3,792.8 L912.3,793.4 L915.4,793.1 L918.4,793.9 L921.5,794.5 L924.5,794.4 L927.6,794.2 L930.6,793.2 L933.7,793.3 L936.7,793.1 L939.8,794.1 L942.8,794.5 L945.9,793.8 L948.9,793.4 L952.0,793.0 L955.0,793.5 L958.1,793.1 L961.1,793.8 L964.2,793.9 L967.2,794.2 L970.3,793.7 L973.3,793.1 L976.4,793.1 L979.4,793.3 L982.5,794.1 L985.5,794.3 L988.6,794.6 L991.6,794.1 L994.7,793.8 L997.7,793.2 L1000.8,792.8 L1003.8,794.0 L1006.9,794.6 L1009.9,794.6 L1013.0,793.9" fill="none" stroke="#55b6dc" stroke-width="1.2"/></svg>
<div class="a" style="left:280px;top:710px;width:320px;height:42px;background:#333;border-radius:4px"></div>
<div class="a" style="left:295px;top:728px;width:6px;height:6px;border-radius:50%;background:#96cb64"></div>
<div class="a" style="left:305px;top:723px;font-size:13px;color:#fff;">Переходы из поисковых си...</div>
<div class="a" style="right:1328px;top:723px;font-size:13px;color:#fff;letter-spacing:-0.4px">342&#8201;814 (95,8&#8201;%)</div>
<div class="a" style="left:225px;top:918px;width:8px;height:8px;border-radius:50%;background:#96cb64"></div>
<div class="a" style="left:240px;top:914px;font-size:13px;color:#000;">Переходы из поисковых систем</div>
<div class="a" style="right:1331px;top:914px;font-size:13px;color:#000;">95,8&#8201;%</div>
<svg class="a" style="left:974px;top:596px" width="20" height="20" viewBox="-10 -10 20 20"><g fill="#b2b2b2"><circle r="5.7"/><polygon points="-2.40,-4.70 -1.30,-8.90 1.30,-8.90 2.40,-4.70"/><polygon points="1.63,-5.02 5.37,-7.21 7.21,-5.37 5.02,-1.63"/><polygon points="4.70,-2.40 8.90,-1.30 8.90,1.30 4.70,2.40"/><polygon points="5.02,1.63 7.21,5.37 5.37,7.21 1.63,5.02"/><polygon points="2.40,4.70 1.30,8.90 -1.30,8.90 -2.40,4.70"/><polygon points="-1.63,5.02 -5.37,7.21 -7.21,5.37 -5.02,1.63"/><polygon points="-4.70,2.40 -8.90,1.30 -8.90,-1.30 -4.70,-2.40"/><polygon points="-5.02,-1.63 -7.21,-5.37 -5.37,-7.21 -1.63,-5.02"/></g><circle r="4.0" fill="#fff"/></svg><svg class="a" style="left:1003px;top:598px" width="10" height="16" viewBox="0 0 10 16"><g fill="#b0b0b0"><rect x="0" y="0" width="4" height="4"/><rect x="6" y="0" width="4" height="4"/><rect x="0" y="6" width="4" height="4"/><rect x="6" y="6" width="4" height="4"/><rect x="0" y="12" width="4" height="4"/><rect x="6" y="12" width="4" height="4"/></g></svg>
<div class="a" style="left:657px;top:595px;font-size:19px;color:#000;letter-spacing:-0.4px">Отказы</div>
<div class="a" style="left:657px;top:628px;font-size:23px;color:#000;letter-spacing:-0.5px">8,86&#8201;%</div>
<div class="a" style="left:657px;top:657px;font-size:13px;color:#e8343c;letter-spacing:-0.4px">+1,54&#8201;%</div>
<svg class="a" style="left:974px;top:750px" width="20" height="20" viewBox="-10 -10 20 20"><g fill="#b2b2b2"><circle r="5.7"/><polygon points="-2.40,-4.70 -1.30,-8.90 1.30,-8.90 2.40,-4.70"/><polygon points="1.63,-5.02 5.37,-7.21 7.21,-5.37 5.02,-1.63"/><polygon points="4.70,-2.40 8.90,-1.30 8.90,1.30 4.70,2.40"/><polygon points="5.02,1.63 7.21,5.37 5.37,7.21 1.63,5.02"/><polygon points="2.40,4.70 1.30,8.90 -1.30,8.90 -2.40,4.70"/><polygon points="-1.63,5.02 -5.37,7.21 -7.21,5.37 -5.02,1.63"/><polygon points="-4.70,2.40 -8.90,1.30 -8.90,-1.30 -4.70,-2.40"/><polygon points="-5.02,-1.63 -7.21,-5.37 -5.37,-7.21 -1.63,-5.02"/></g><circle r="4.0" fill="#fff"/></svg><svg class="a" style="left:1003px;top:752px" width="10" height="16" viewBox="0 0 10 16"><g fill="#b0b0b0"><rect x="0" y="0" width="4" height="4"/><rect x="6" y="0" width="4" height="4"/><rect x="0" y="6" width="4" height="4"/><rect x="6" y="6" width="4" height="4"/><rect x="0" y="12" width="4" height="4"/><rect x="6" y="12" width="4" height="4"/></g></svg>
<div class="a" style="left:657px;top:749px;font-size:19px;color:#000;letter-spacing:-0.4px">Глубина просмотра</div>
<div class="a" style="left:658px;top:782px;font-size:23px;color:#000;letter-spacing:0.3px">1,27</div>
<svg class="a" style="left:974px;top:904px" width="20" height="20" viewBox="-10 -10 20 20"><g fill="#b2b2b2"><circle r="5.7"/><polygon points="-2.40,-4.70 -1.30,-8.90 1.30,-8.90 2.40,-4.70"/><polygon points="1.63,-5.02 5.37,-7.21 7.21,-5.37 5.02,-1.63"/><polygon points="4.70,-2.40 8.90,-1.30 8.90,1.30 4.70,2.40"/><polygon points="5.02,1.63 7.21,5.37 5.37,7.21 1.63,5.02"/><polygon points="2.40,4.70 1.30,8.90 -1.30,8.90 -2.40,4.70"/><polygon points="-1.63,5.02 -5.37,7.21 -7.21,5.37 -5.02,1.63"/><polygon points="-4.70,2.40 -8.90,1.30 -8.90,-1.30 -4.70,-2.40"/><polygon points="-5.02,-1.63 -7.21,-5.37 -5.37,-7.21 -1.63,-5.02"/></g><circle r="4.0" fill="#fff"/></svg><svg class="a" style="left:1003px;top:906px" width="10" height="16" viewBox="0 0 10 16"><g fill="#b0b0b0"><rect x="0" y="0" width="4" height="4"/><rect x="6" y="0" width="4" height="4"/><rect x="0" y="6" width="4" height="4"/><rect x="6" y="6" width="4" height="4"/><rect x="0" y="12" width="4" height="4"/><rect x="6" y="12" width="4" height="4"/></g></svg>
<div class="a" style="left:657px;top:903px;font-size:19px;color:#000;letter-spacing:-0.67px">Время на сайте</div>
<svg class="a" style="left:1407px;top:800px" width="20" height="20" viewBox="-10 -10 20 20"><g fill="#b2b2b2"><circle r="5.7"/><polygon points="-2.40,-4.70 -1.30,-8.90 1.30,-8.90 2.40,-4.70"/><polygon points="1.63,-5.02 5.37,-7.21 7.21,-5.37 5.02,-1.63"/><polygon points="4.70,-2.40 8.90,-1.30 8.90,1.30 4.70,2.40"/><polygon points="5.02,1.63 7.21,5.37 5.37,7.21 1.63,5.02"/><polygon points="2.40,4.70 1.30,8.90 -1.30,8.90 -2.40,4.70"/><polygon points="-1.63,5.02 -5.37,7.21 -7.21,5.37 -5.02,1.63"/><polygon points="-4.70,2.40 -8.90,1.30 -8.90,-1.30 -4.70,-2.40"/><polygon points="-5.02,-1.63 -7.21,-5.37 -5.37,-7.21 -1.63,-5.02"/></g><circle r="4.0" fill="#fff"/></svg><svg class="a" style="left:1436px;top:802px" width="10" height="16" viewBox="0 0 10 16"><g fill="#b0b0b0"><rect x="0" y="0" width="4" height="4"/><rect x="6" y="0" width="4" height="4"/><rect x="0" y="6" width="4" height="4"/><rect x="6" y="6" width="4" height="4"/><rect x="0" y="12" width="4" height="4"/><rect x="6" y="12" width="4" height="4"/></g></svg>
<div class="a" style="left:1090px;top:800px;font-size:19px;color:#000;letter-spacing:-0.6px">Последняя поисковая фраза</div>
<div class="a" style="left:1090px;top:849px;font-size:13px;color:#000;font-weight:bold;letter-spacing:-0.4px">Последняя поисковая фраза</div>
<div class="a" style="right:466px;top:849px;font-size:13px;color:#000;font-weight:bold"><span style="font-size:11px;position:relative;top:-1px">▼</span> Визиты</div>
<div class="a" style="left:1093px;top:880px;font-size:20px;color:#f33;transform:scaleX(0.66);transform-origin:0 0;-webkit-text-stroke:0.3px #f33">Я</div>
<div class="a" style="left:1110px;top:884px;font-size:13px;color:#2443b8;letter-spacing:0.1px">топаз</div>
<div class="a" style="right:466px;top:884px;font-size:13px;color:#000;">1&#8201;978</div>
<div class="a" style="left:1093px;top:917px;font-size:20px;color:#f33;transform:scaleX(0.66);transform-origin:0 0;-webkit-text-stroke:0.3px #f33">Я</div>
<div class="a" style="left:1110px;top:921px;font-size:13px;color:#2443b8;letter-spacing:0.1px">топаз камень</div>
<div class="a" style="right:466px;top:921px;font-size:13px;color:#000;">1&#8201;913</div>

<div id="scroll"></div>
<div class="a" style="left:1899px;top:7px;width:1px;height:933px;background:#e8e8e8"></div>
<div class="a" style="left:1901px;top:23px;width:12px;height:516px;background:#c1c1c1"></div>
<svg class="a" style="left:1902px;top:13px" width="10" height="6" viewBox="0 0 10 6"><path d="M0.5,5.5 L5,0.5 L9.5,5.5Z" fill="#a3a3a3"/></svg>
<svg class="a" style="left:1902px;top:928px" width="10" height="6" viewBox="0 0 10 6"><path d="M0.5,0.5 L5,5.5 L9.5,0.5Z" fill="#505050"/></svg>
<div id="bottom"></div>
</body></html>
